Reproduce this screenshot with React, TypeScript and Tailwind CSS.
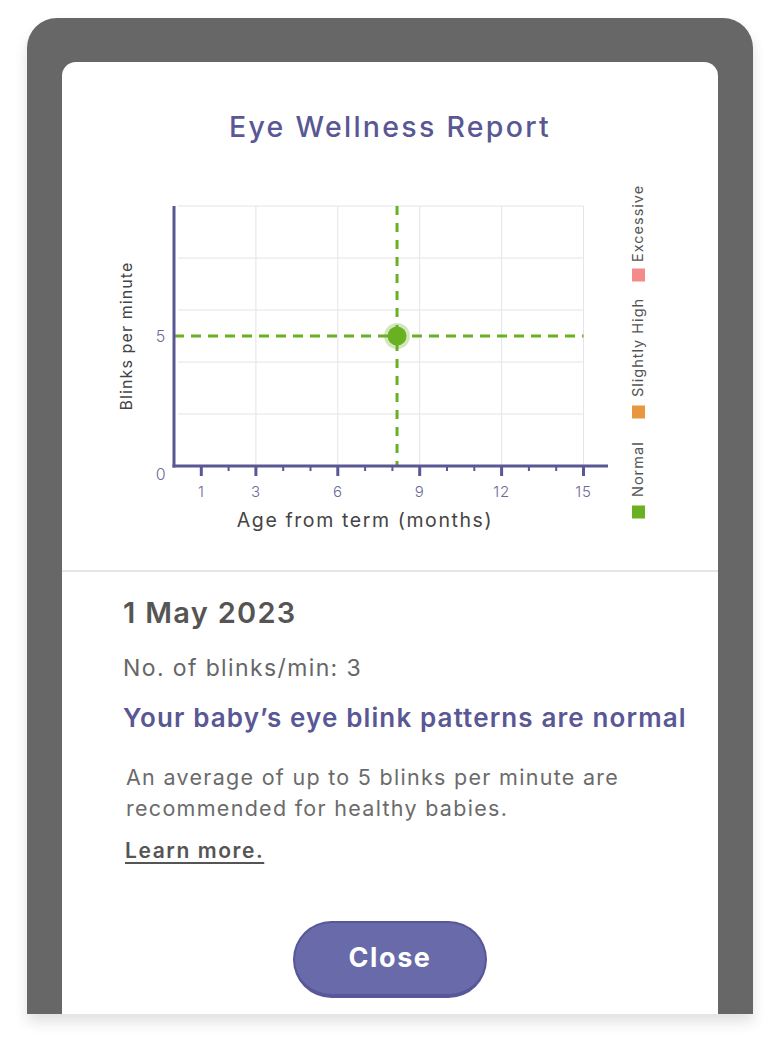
import React from 'react';

const AXIS = '#5a5795';
const GRID = '#e4e4ea';
const GREEN = '#6ab023';
const FONT = "Inter, 'Liberation Sans', sans-serif";

// chart geometry, in page pixels (svg viewBox matches page coords)
const X0 = 174;
const Y0 = 466;
const PX_PER_MONTH = 27.3;
const PX_PER_BLINK = 26;

const xAt = (m: number) => X0 + m * PX_PER_MONTH;
const yAt = (b: number) => Y0 - b * PX_PER_BLINK;

const majorTicks = [1, 3, 6, 9, 12, 15];
const minorTicks = [2, 4, 5, 7, 8, 10, 11, 13, 14];
const gridX = [3, 6, 9, 12, 15];
const gridY = [2, 4, 6, 8, 10];

const legend = [
    { label: 'Normal', color: '#6ab023', square: 512, text: 497 },
    { label: 'Slightly High', color: '#e8973f', square: 412, text: 397 },
    { label: 'Excessive', color: '#f58a8a', square: 275, text: 262 },
];

const Chart = ({ month, blinks }: { month: number; blinks: number }) => {
    const px = xAt(month);
    const py = yAt(blinks);
    return (
        <svg width={658} height={400} viewBox="62 170 658 400" className="block">
            {gridX.map((m) => (
                <line key={m} x1={xAt(m)} x2={xAt(m)} y1={yAt(10)} y2={Y0} stroke={GRID} strokeWidth={1} />
            ))}
            {gridY.map((b) => (
                <line key={b} x1={X0 + 4} x2={xAt(15)} y1={yAt(b)} y2={yAt(b)} stroke={GRID} strokeWidth={1} />
            ))}

            {/* reading guides */}
            <line x1={X0} x2={xAt(15)} y1={py} y2={py} stroke={GREEN} strokeWidth={3} strokeDasharray="10 7" />
            <line x1={px} x2={px} y1={yAt(10)} y2={Y0} stroke={GREEN} strokeWidth={3} strokeDasharray="9 8" />

            {/* axes */}
            <line x1={X0} x2={X0} y1={yAt(10)} y2={Y0 + 1.5} stroke={AXIS} strokeWidth={3} />
            <line x1={X0 - 1.5} x2={608} y1={Y0} y2={Y0} stroke={AXIS} strokeWidth={3} />
            {majorTicks.map((m) => (
                <line key={m} x1={xAt(m)} x2={xAt(m)} y1={Y0} y2={Y0 + 10} stroke={AXIS} strokeWidth={3} />
            ))}
            {minorTicks.map((m) => (
                <line key={m} x1={xAt(m)} x2={xAt(m)} y1={Y0} y2={Y0 + 5} stroke={AXIS} strokeWidth={2} />
            ))}

            {/* point */}
            <circle cx={px} cy={py} r={13} fill={GREEN} fillOpacity={0.3} />
            <circle cx={px} cy={py} r={9.5} fill={GREEN} />

            <g fontFamily={FONT} fill="#6b6999" fontSize={15} fontWeight={300} letterSpacing={0.8}>
                {majorTicks.map((m) => (
                    <text key={m} x={xAt(m)} y={497} textAnchor="middle">{m}</text>
                ))}
                <text x={161} y={342} textAnchor="middle" fontSize={16}>5</text>
                <text x={161} y={480} textAnchor="middle" fontSize={16}>0</text>
            </g>

            <text
                x={365}
                y={527}
                textAnchor="middle"
                fontFamily={FONT}
                fontSize={19.5}
                letterSpacing={1.6}
                fill="#444"
            >
                Age from term (months)
            </text>
            <text
                transform="translate(132 336) rotate(-90)"
                textAnchor="middle"
                fontFamily={FONT}
                fontSize={16}
                letterSpacing={1.1}
                fill="#444"
            >
                Blinks per minute
            </text>

            {legend.map((l) => (
                <g key={l.label}>
                    <rect x={632} y={l.square - 6.5} width={13} height={13} fill={l.color} />
                    <text
                        transform={`translate(643 ${l.text}) rotate(-90)`}
                        fontFamily={FONT}
                        fontSize={14.5}
                        letterSpacing={1}
                        fill="#555"
                    >
                        {l.label}
                    </text>
                </g>
            ))}
        </svg>
    );
};

export default function App() {
    return (
        <div className="min-h-[1050px] bg-white px-[27px] pt-[18px] font-['Inter','Liberation_Sans',sans-serif]">
            <div className="h-[996px] rounded-t-[30px] bg-[#676767] px-[35px] pt-[44px] shadow-[0_8px_14px_rgba(0,0,0,0.12)]">
                <div className="flex h-full flex-col rounded-t-[14px] bg-white">
                    <h1 className="pt-[48px] text-center text-[28.5px] leading-[34px] font-medium tracking-[0.08em] text-[#5a5795]">
                        Eye Wellness Report
                    </h1>
                    <div className="mt-[26px]">
                        <Chart month={8.17} blinks={5} />
                    </div>

                    <div className="border-t-2 border-[#e6e6e9] px-[61px] pt-[24px]">
                        <p className="text-[29px] leading-[34px] font-semibold tracking-[0.045em] text-[#555]">1 May 2023</p>
                        <p className="mt-[24px] text-[23px] leading-[28px] tracking-[0.06em] text-[#666]">No. of blinks/min: 3</p>
                        <p className="mt-[20px] whitespace-nowrap text-[26px] leading-[32px] font-semibold tracking-[0.043em] text-[#5a5795]">
                            Your baby’s eye blink patterns are normal
                        </p>
                        <p className="mt-[28px] pl-[3px] text-[21.5px] leading-[31px] tracking-[0.06em] text-[#6b6b6b]">
                            An average of up to 5 blinks per minute are
                            <br />
                            recommended for healthy babies.
                        </p>
                        <a className="mt-[13px] block pl-[2px] text-[21px] leading-[28px] font-semibold tracking-[0.075em] text-[#555] underline underline-offset-[4px]">
                            Learn more.
                        </a>
                    </div>

                    <div className="mt-[56px] flex justify-center">
                        <button className="h-[77px] w-[194px] rounded-full border-2 border-[#57579a] border-b-[4px] bg-[#686aa9] text-[27px] font-bold tracking-[0.06em] text-white">
                            Close
                        </button>
                    </div>
                </div>
            </div>
        </div>
    );
}
